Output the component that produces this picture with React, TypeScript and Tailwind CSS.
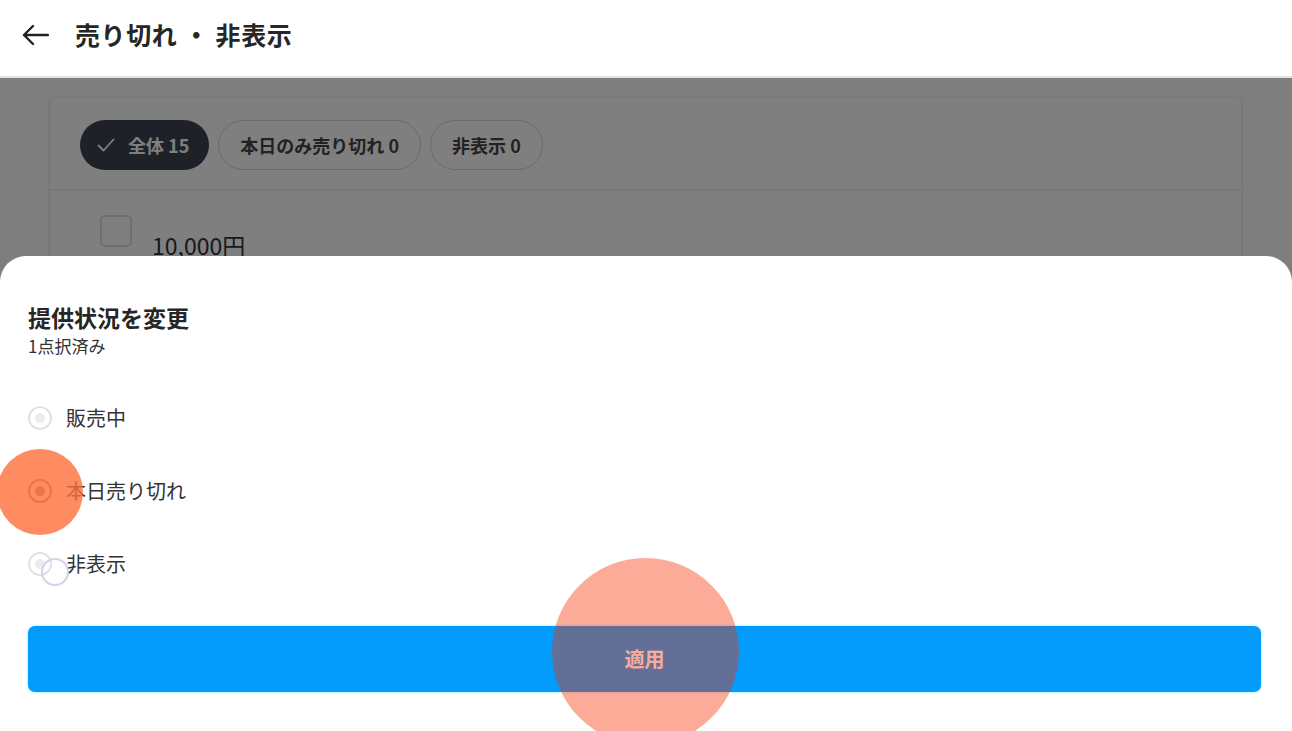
import React from "react";

const font = { fontFamily: '"Noto Sans CJK JP", "Noto Sans", sans-serif' };

function Radio({ selected }: { selected?: boolean }) {
  return (
    <div
      className={
        "w-[24px] h-[24px] rounded-full border-2 flex items-center justify-center " +
        (selected ? "border-[#8a8a8a]" : "border-[#e2e2e2]")
      }
    >
      <div className={"w-[10px] h-[10px] rounded-full " + (selected ? "bg-[#8a8a8a]" : "bg-[#ececec]")} />
    </div>
  );
}

export default function App() {
  return (
    <div className="w-[1292px] h-[731px] relative overflow-hidden bg-white" style={font}>
      {/* header */}
      <div className="h-[78px] flex items-center pb-[6px] border-b-2 border-[#e3e3e3] bg-white">
        <svg className="ml-[22px]" width="27" height="22" viewBox="0 0 27 22" fill="none">
          <path d="M26 11H2M11 2L2 11l9 9" stroke="#222" strokeWidth="2.4" strokeLinecap="round" strokeLinejoin="round" />
        </svg>
        <div className="ml-[26px] text-[25px] font-bold text-[#262626] tracking-[0.6px]">売り切れ ・ 非表示</div>
      </div>

      {/* page body */}
      <div className="bg-[#fdfdfd] h-[653px] pt-[19px] px-[49px]">
        <div className="bg-white rounded-[6px] border border-[#ececec] shadow-sm h-[400px] w-[1193px]">
          <div className="flex items-center gap-[9px] px-[30px] pt-[22px] pb-[19px] border-b-2 border-[#ededed]">
            <div className="h-[50px] pl-[17px] pr-[20px] rounded-full bg-[#3c4250] flex items-center gap-[13px] text-white text-[18px] font-bold">
              <svg width="18" height="14" viewBox="0 0 18 14" fill="none">
                <path d="M1.5 7.5l5 5L16.5 1.5" stroke="#fff" strokeWidth="1.8" strokeLinecap="round" strokeLinejoin="round" />
              </svg>
              <span>全体 15</span>
            </div>
            <div className="h-[50px] px-[21px] rounded-full border border-[#d4d4d4] flex items-center text-[18px] font-bold text-[#444]">
              本日のみ売り切れ 0
            </div>
            <div className="h-[50px] px-[21px] rounded-full border border-[#d4d4d4] flex items-center text-[18px] font-bold text-[#444]">
              非表示 0
            </div>
          </div>
          <div className="flex pl-[50px] pt-[24px] gap-[20px]">
            <div className="w-[32px] h-[32px] rounded-[5px] border-2 border-[#dedede] bg-white" />
            <div className="mt-[14px] text-[23px] text-[#333] leading-[32px]">10,000円</div>
          </div>
        </div>
      </div>

      {/* dim overlay */}
      <div className="absolute left-0 right-0 top-[78px] bottom-0 bg-black/50" />

      {/* bottom sheet */}
      <div className="absolute left-0 right-0 top-[256px] bottom-0 bg-white rounded-t-[26px] pl-[28px] pr-[31px] pt-[44px]">
        <div className="text-[23px] font-bold text-[#262626] leading-[34px]">提供状況を変更</div>
        <div className="text-[17px] text-[#333] leading-[24px]">1点択済み</div>
        <div className="mt-[48px] flex flex-col gap-[49px]">
          <div className="flex items-center gap-[14px] h-[24px]">
            <Radio />
            <span className="text-[20px] text-[#333]">販売中</span>
          </div>
          <div className="flex items-center gap-[14px] h-[24px]">
            <Radio selected />
            <span className="text-[20px] text-[#333]">本日売り切れ</span>
          </div>
          <div className="flex items-center gap-[14px] h-[24px]">
            <Radio />
            <span className="text-[20px] text-[#333]">非表示</span>
          </div>
        </div>
        <div className="mt-[50px] h-[66px] rounded-[7px] bg-[#039cfc] shadow-[0_0_3px_#7fe9ff] flex items-center justify-center text-white text-[20px] font-bold">
          適用
        </div>
      </div>

      {/* touch indicators */}
      <div className="absolute left-[-3px] top-[449px] w-[86px] h-[86px] rounded-full bg-[rgba(255,110,56,0.8)]" />
      <div className="absolute left-[41px] top-[558px] w-[28px] h-[28px] rounded-full border-2 border-[#d2d2ea]" />
      <div className="absolute left-[552px] top-[558px] w-[187px] h-[187px] rounded-full bg-[rgba(247,45,0,0.4)]" />
    </div>
  );
}
